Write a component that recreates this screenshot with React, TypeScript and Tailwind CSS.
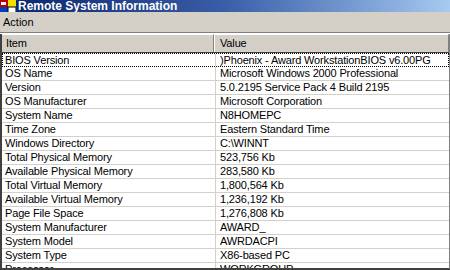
const rows: [string, string][] = [
  ["BIOS Version", ")Phoenix - Award WorkstationBIOS v6.00PG"],
  ["OS Name", "Microsoft Windows 2000 Professional"],
  ["Version", "5.0.2195 Service Pack 4 Build 2195"],
  ["OS Manufacturer", "Microsoft Corporation"],
  ["System Name", "N8HOMEPC"],
  ["Time Zone", "Eastern Standard Time"],
  ["Windows Directory", "C:\\WINNT"],
  ["Total Physical Memory", "523,756 Kb"],
  ["Available Physical Memory", "283,580 Kb"],
  ["Total Virtual Memory", "1,800,564 Kb"],
  ["Available Virtual Memory", "1,236,192 Kb"],
  ["Page File Space", "1,276,808 Kb"],
  ["System Manufacturer", "AWARD_"],
  ["System Model", "AWRDACPI"],
  ["System Type", "X86-based PC"],
  ["Processor", "WORKGROUP"],
];

function AppIcon() {
  return (
    <svg width="16" height="14" viewBox="0 0 16 14" className="shrink-0">
      <rect x="0" y="0" width="8" height="7" fill="#c00000" />
      <rect x="8" y="0" width="8" height="7" fill="#f0e000" />
      <rect x="0" y="7" width="8" height="7" fill="#0040c0" />
      <rect x="8" y="7" width="8" height="7" fill="#fff" stroke="#000" strokeWidth="1" />
      <rect x="1" y="2" width="5" height="3" fill="#fff" />
    </svg>
  );
}

export default function App() {
  return (
    <div className="w-[450px] h-[270px] overflow-hidden bg-[#d4d0c8] flex flex-col font-['Liberation_Sans',Arial,sans-serif] text-black">
      {/* title bar, cut off at top */}
      <div className="h-[12px] shrink-0 overflow-hidden bg-gradient-to-r from-[#0a246a] via-[#3a5ea8] to-[#a6caf0] flex items-end">
        <div className="flex items-end gap-[2px] -mb-[2px]">
          <AppIcon />
          <span className="text-white font-bold text-[12px] leading-[15px]">Remote System Information</span>
        </div>
      </div>

      {/* menu bar */}
      <div className="h-[21px] shrink-0 flex items-end pb-[3px] px-[3px] text-[11px] leading-[13px] border-b border-[#808080]">
        Action
      </div>
      <div className="h-px shrink-0 bg-white" />

      {/* list */}
      <div className="flex-1 flex flex-col border-l-2 border-[#404040] border-b-2 border-r border-r-[#808080] bg-white min-h-0 overflow-hidden tracking-[-0.15px]">
        <div className="h-[19px] shrink-0 flex text-[11px] bg-[#d4d0c8] border-b border-[#404040]">
          <div className="w-[212px] shrink-0 flex items-center px-[4px] border-t border-white border-r border-r-[#808080]">Item</div>
          <div className="w-px bg-white" />
          <div className="flex-1 flex items-center px-[5px] border-t border-white border-r border-r-[#808080]">Value</div>
        </div>
        <div className="flex-1 flex flex-col">
          {rows.map(([k, v], i) => (
            <div
              key={k}
              className={
                i === 0
                  ? "h-[14px] shrink-0 flex text-[11px] leading-[13px] border border-dotted border-black"
                  : "h-[14px] shrink-0 flex text-[11px] leading-[13px] border-b border-[#d4d0c8] px-px"
              }
            >
              <div className="w-[213px] shrink-0 pl-[2px] whitespace-nowrap overflow-hidden border-r border-[#d4d0c8]">{k}</div>
              <div className="flex-1 pl-[4px] whitespace-nowrap overflow-hidden">{v}</div>
            </div>
          ))}
        </div>
      </div>
    </div>
  );
}
